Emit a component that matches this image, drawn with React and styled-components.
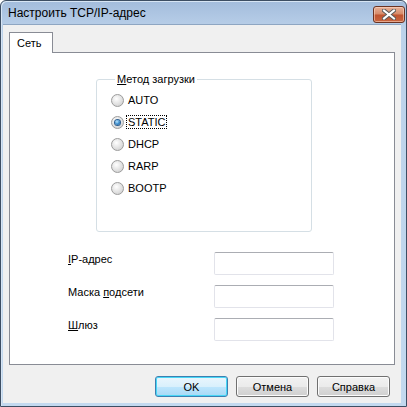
import React from 'react';
import styled, { createGlobalStyle } from 'styled-components';

// GLOBAL
const Global = createGlobalStyle`
  html, body { margin: 0; padding: 0; background: #ffffff; }
  body { font-family: "Liberation Sans", Arial, sans-serif; font-size: 11px; color: #000; }
`;

// WINDOW FRAME
const Window = styled.div`
  width: 407px;
  height: 407px;
  box-sizing: border-box;
  display: flex;
  flex-direction: column;
  border: 1px solid #3d4e63;
  border-radius: 6px 6px 0 0;
  background: linear-gradient(#a3bcdc, #bcd2ea 30px, #c3d9ef);
  padding: 0 5px 3px 2px;
  box-shadow: inset 1px 1px 0 #d7e5f4;
`;

const TitleBar = styled.div`
  height: 23px;
  display: flex;
  align-items: center;
  justify-content: space-between;
  padding: 0 0 0 5px;
  font-size: 12px;
  color: #000;
`;

const CloseButton = styled.div`
  width: 30px;
  height: 15px;
  margin-right: -4px;
  margin-top: 3px;
  border: 1px solid #6b3322;
  border-radius: 3px;
  background: linear-gradient(#e7b098, #d68a68 48%, #bf532f 52%, #c8653f);
  box-shadow: inset 0 0 0 1px rgba(255, 220, 200, 0.55);
  display: flex;
  align-items: center;
  justify-content: center;
`;

const Content = styled.div`
  flex: 1;
  background: #f0f0f0;
  border-top: 1px solid #8ea6c2;
  display: flex;
  flex-direction: column;
  padding: 7px 6px 0 6px;
`;

// TABS
const TabStrip = styled.div`
  display: flex;
  position: relative;
  z-index: 1;
  margin-bottom: -1px;
`;

const Tab = styled.div`
  width: 44px;
  height: 21px;
  box-sizing: border-box;
  border: 1px solid #898c95;
  border-bottom: none;
  background: #ffffff;
  padding: 4px 0 0 7px;
  font-size: 11px;
`;

const Panel = styled.div`
  height: 313px;
  box-sizing: border-box;
  width: 386px;
  border: 1px solid #898c95;
  background: #ffffff;
  display: flex;
  flex-direction: column;
  padding-top: 20px;
`;

// GROUP BOX
const GroupBox = styled.fieldset`
  margin: 0 0 0 86px;
  width: 216px;
  height: 159px;
  box-sizing: border-box;
  border: 1px solid #d5dfe5;
  border-radius: 3px;
  padding: 8px 0 0 14px;
  display: flex;
  flex-direction: column;
  gap: 8px;
`;

const Legend = styled.legend`
  padding: 0 2px;
  margin-left: 4px;
  font-size: 11px;
`;

const Key = styled.span`
  text-decoration: underline;
`;

const RadioRow = styled.label`
  display: flex;
  align-items: center;
  gap: 3px;
  height: 14px;
  font-size: 11px;
`;

const RadioDot = styled.span`
  width: 11px;
  height: 11px;
  border-radius: 50%;
  border: 1px solid #9c9c9c;
  background: radial-gradient(circle at 40% 35%, #ffffff 0, #e6e6e6 45%, #c9c9c9 100%);
  display: flex;
  align-items: center;
  justify-content: center;
  &::after {
    content: '';
    width: 5px;
    height: 5px;
    border-radius: 50%;
    display: ${p => (p.$checked ? 'block' : 'none')};
    background: radial-gradient(circle at 40% 35%, #bfe8ff 0, #3b8fd0 50%, #1d4f86 100%);
    box-shadow: 0 0 0 1px #2d5f91;
  }
`;

const RadioText = styled.span`
  padding: 0 1px;
  outline: ${p => (p.$focused ? '1px dotted #000' : 'none')};
`;

// FIELDS
const Fields = styled.div`
  display: flex;
  flex-direction: column;
  gap: 10px;
  margin: 20px 0 0 58px;
`;

const FieldRow = styled.div`
  display: flex;
  align-items: flex-start;
`;

const FieldLabel = styled.div`
  width: 146px;
  padding-top: 1px;
  font-size: 11px;
`;

const TextBox = styled.div`
  width: 120px;
  height: 23px;
  box-sizing: border-box;
  border: 1px solid #e2e3ea;
  border-top-color: #abadb3;
  border-radius: 2px;
  background: #ffffff;
`;

// BUTTONS
const ButtonRow = styled.div`
  display: flex;
  justify-content: flex-end;
  gap: 8px;
  padding: 11px 5px 0 0;
`;

const Button = styled.div`
  width: 73px;
  height: 21px;
  box-sizing: border-box;
  border: 1px solid ${p => (p.$default ? '#3c7fb1' : '#707070')};
  border-radius: 3px;
  display: flex;
  align-items: center;
  justify-content: center;
  font-size: 11px;
  background: ${p =>
    p.$default
      ? 'linear-gradient(#eaf6fd, #d9f0fc 50%, #bee6fd 50%, #a7d9f5)'
      : 'linear-gradient(#f2f2f2, #ebebeb 50%, #dddddd 50%, #cfcfcf)'};
  box-shadow: inset 0 0 0 1px ${p => (p.$default ? '#48d7f6' : '#fcfcfc')};
`;

const radios = ['AUTO', 'STATIC', 'DHCP', 'RARP', 'BOOTP'];

export default function App() {
  return (
    <>
      <Global />
      <Window>
        <TitleBar>
          <span>Настроить TCP/IP-адрес</span>
          <CloseButton>
            <svg width="14" height="11" viewBox="0 0 14 11">
              <path d="M2 1.5 L12 9.5 M12 1.5 L2 9.5" stroke="#5a5a5a" strokeWidth="4" strokeLinecap="square" />
              <path d="M2 1.5 L12 9.5 M12 1.5 L2 9.5" stroke="#ffffff" strokeWidth="2" strokeLinecap="square" />
            </svg>
          </CloseButton>
        </TitleBar>
        <Content>
          <TabStrip>
            <Tab>Сеть</Tab>
          </TabStrip>
          <Panel>
            <GroupBox>
              <Legend><Key>М</Key>етод загрузки</Legend>
              {radios.map(r => (
                <RadioRow key={r}>
                  <RadioDot $checked={r === 'STATIC'} />
                  <RadioText $focused={r === 'STATIC'}>{r}</RadioText>
                </RadioRow>
              ))}
            </GroupBox>
            <Fields>
              <FieldRow>
                <FieldLabel><Key>I</Key>P-адрес</FieldLabel>
                <TextBox />
              </FieldRow>
              <FieldRow>
                <FieldLabel>Маска <Key>п</Key>одсети</FieldLabel>
                <TextBox />
              </FieldRow>
              <FieldRow>
                <FieldLabel><Key>Ш</Key>люз</FieldLabel>
                <TextBox />
              </FieldRow>
            </Fields>
          </Panel>
          <ButtonRow>
            <Button $default>OK</Button>
            <Button>Отмена</Button>
            <Button>Справка</Button>
          </ButtonRow>
        </Content>
      </Window>
    </>
  );
}
